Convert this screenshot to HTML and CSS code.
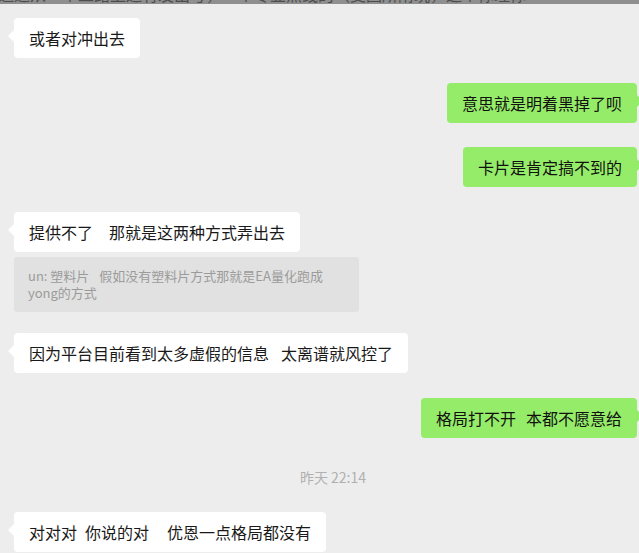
FILE: index.html
```html
<!DOCTYPE html>
<html lang="zh-CN">
<head>
    <meta charset="UTF-8">
    <meta name="viewport" content="width=device-width, initial-scale=1.0">
    <title>聊天记录</title>
    <link rel="stylesheet" href="styles.css">
</head>
<body>
    <div class="topbar">
        <p class="cut">通过从一个工路上还有发出号，一个专业点线的（支回所附玩，这个你理你</p>
    </div>

    <div class="chat">
        <div class="msg left">
            <div class="bubble">或者对冲出去</div>
        </div>

        <div class="msg right">
            <div class="bubble">意思就是明着黑掉了呗</div>
        </div>

        <div class="msg right">
            <div class="bubble">卡片是肯定搞不到的</div>
        </div>

        <div class="msg left with-quote">
            <div class="bubble">提供不了<span class="gap gap-16"></span>那就是这两种方式弄出去</div>
            <div class="quote">un: 塑料片<span class="gap gap-10"></span>假如没有塑料片方式那就是EA量化跑成<br>yong的方式</div>
        </div>

        <div class="msg left">
            <div class="bubble">因为平台目前看到太多虚假的信息<span class="gap gap-12"></span>太离谱就风控了</div>
        </div>

        <div class="msg right">
            <div class="bubble">格局打不开<span class="gap gap-10"></span>本都不愿意给</div>
        </div>

        <div class="time">昨天 22:14</div>

        <div class="msg left">
            <div class="bubble">对对对<span class="gap gap-8"></span>你说的对<span class="gap gap-18"></span>优恩一点格局都没有</div>
        </div>
    </div>
</body>
</html>
```

FILE: styles.css
```css
html, body {
    margin: 0;
    padding: 0;
}
body {
    width: 639px;
    height: 553px;
    overflow: hidden;
    background-color: #ededed;
    font-family: "Noto Sans CJK SC", "Noto Sans", sans-serif;
    color: #191919;
}
.topbar {
    height: 4px;
    overflow: hidden;
    background-color: #8f8f8f;
}
.cut {
    margin: -16px 0 0 -2px;
    font-size: 16px;
    line-height: 20px;
    color: #4d4d4d;
    white-space: nowrap;
}
.chat {
    display: flex;
    flex-direction: column;
    gap: 24.5px;
    padding: 14px 2px 0 14px;
}
.msg {
    display: flex;
    flex-direction: column;
}
.msg.left {
    align-items: flex-start;
}
.msg.right {
    align-items: flex-end;
}
.msg.with-quote {
    margin-bottom: -3px;
}
.bubble {
    position: relative;
    padding: 10px 15px;
    font-size: 16px;
    line-height: 20px;
    border-radius: 4px;
    background-color: #ffffff;
    white-space: nowrap;
}
.left .bubble::before {
    content: "";
    position: absolute;
    left: -6px;
    top: 12px;
    border-top: 6px solid transparent;
    border-bottom: 6px solid transparent;
    border-right: 6px solid #ffffff;
}
.right .bubble {
    background-color: #95ec69;
    color: #111111;
}
.right .bubble::after {
    content: "";
    position: absolute;
    right: -6px;
    top: 12px;
    border-top: 6px solid transparent;
    border-bottom: 6px solid transparent;
    border-left: 6px solid #95ec69;
}
.gap {
    display: inline-block;
}
.gap-8 { width: 8px; }
.gap-10 { width: 10px; }
.gap-12 { width: 12px; }
.gap-16 { width: 16px; }
.gap-18 { width: 18px; }
.quote {
    margin-top: 5px;
    width: 317px;
    padding: 10.5px 14px;
    font-size: 13px;
    line-height: 17px;
    color: #9b9b9b;
    background-color: #e1e1e1;
    border-radius: 3px;
    white-space: nowrap;
}
.time {
    margin-top: 5px;
    padding-left: 15px;
    text-align: center;
    font-size: 14px;
    line-height: 20px;
    color: #b0b0b0;
}
```
